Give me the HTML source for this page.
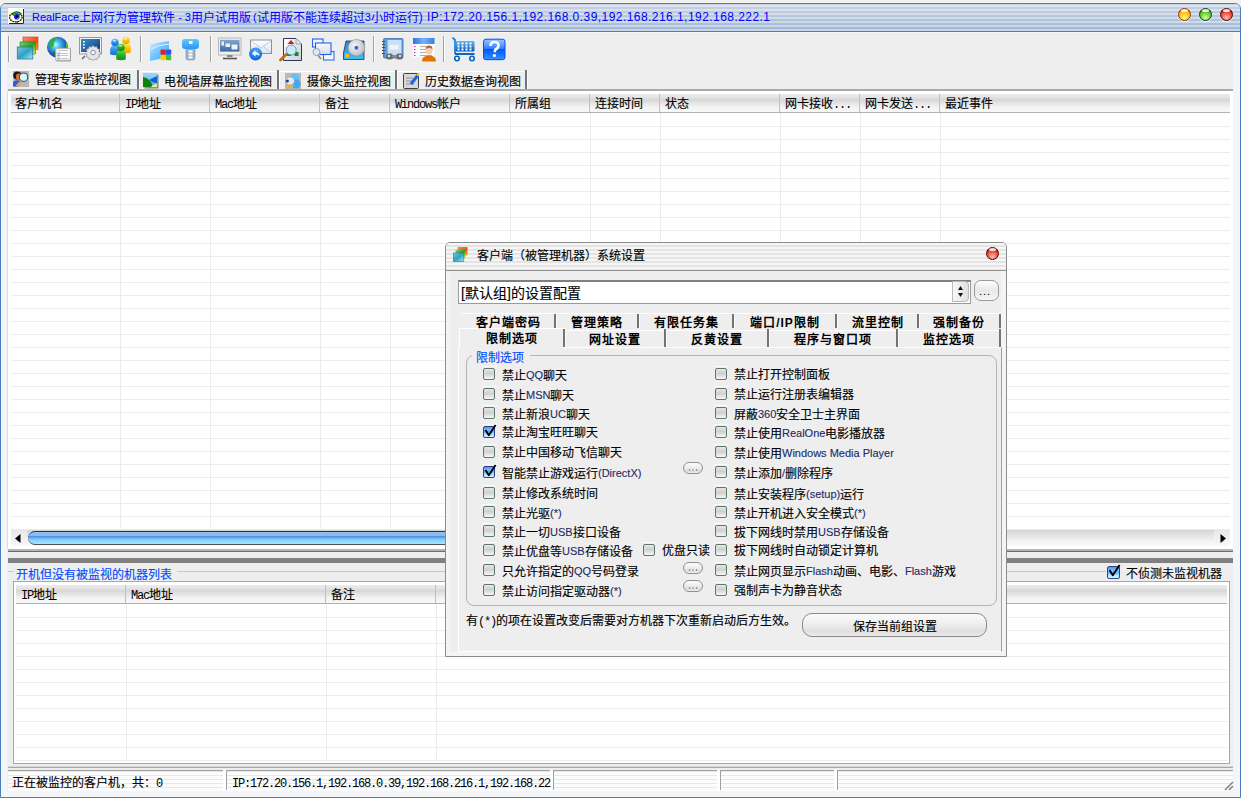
<!DOCTYPE html>
<html lang="zh-CN"><head><meta charset="utf-8">
<style>
*{box-sizing:border-box;margin:0;padding:0}
html,body{width:1241px;height:798px;overflow:hidden;background:#f0f0f0;font-family:"Liberation Sans",sans-serif;font-size:12px;color:#000;line-height:1}
.a{position:absolute}
.tx{white-space:nowrap;line-height:16px;-webkit-text-stroke:0.12px currentColor}
.l{font-size:11px;vertical-align:1px}
.m{font-family:"Liberation Mono",monospace;font-size:12px;letter-spacing:-1.2px;-webkit-text-stroke:0}
.hdr{background:linear-gradient(180deg,#ececec 0,#e4e4e4 18%,#d6d6d6 33%,#e4e4e4 50%,#f4f4f4 75%,#f8f8f8 100%);border-bottom:1px solid #b0b0b0}
.hs{background:#c0c0c0}
.sep{border-left:1px solid #a0a0a0;border-right:1px solid #fff}
.ball{border-radius:50%}
.cb{border:1px solid #5d7a68;border-radius:2px;background:linear-gradient(180deg,#e6e6e6,#d0d0d0 45%,#f6f6f6)}
.cbk{border:1px solid #30408a;border-radius:2px;background:linear-gradient(180deg,#5090f0 0,#80c0ff 30%,#58b0ff 45%,#a8e4ff 75%,#d0faff 100%)}
.stripe{background:repeating-linear-gradient(180deg,#fcfcfc 0 1px,#e8e8e8 1px 2px,#fcfcfc 2px 4px)}
.grp{color:#0048ff}
.nv{color:#1c2c66}
</style></head><body>
<div class="a " style="left:0px;top:3px;width:1241px;height:795px;border:1px solid #4b7cbd;border-radius:6px 6px 0 0;background:#f3f5f9"></div>
<div class="a " style="left:1px;top:4px;width:1239px;height:27px;border-radius:5px 5px 0 0;background:repeating-linear-gradient(180deg,rgba(255,255,255,0) 0 1px,rgba(255,255,255,.4) 1px 3px,rgba(255,255,255,0) 3px 4px),linear-gradient(180deg,#c8d3e2,#9fb8d6)"></div>
<div class="a " style="left:0px;top:31px;width:1241px;height:1px;background:#4b7cbd"></div>
<div class="a " style="left:1px;top:32px;width:1239px;height:1px;background:#faf7f0"></div>
<div class="a " style="left:7px;top:33px;width:1226px;height:758px;background:#eeeeee"></div>
<div class="a tx" style="left:32px;top:9px;color:#0000ff;-webkit-text-stroke:0"><span class="l">RealFace</span>上网行为管理软件<span class="l"> - 3</span>用户试用版<span class="l" style="margin-left:2px">(</span>试用版不能连续超过<span class="l">3</span>小时运行<span class="l" style="font-size:12px;letter-spacing:0.45px">) IP:172.20.156.1,192.168.0.39,192.168.216.1,192.168.222.1</span></div>
<svg class="a" style="left:8px;top:8px" width="16" height="16" viewBox="0 0 16 16"><rect x="0" y="0" width="16" height="16" fill="#fff"/><path d="M15.5 1V15.5H1" stroke="#800000" stroke-width="1" fill="none"/><ellipse cx="7.8" cy="9.3" rx="6.3" ry="4.6" fill="none" stroke="#b8a800" stroke-width="1.2"/><ellipse cx="7.8" cy="9.3" rx="6.3" ry="4.6" fill="none" stroke="#000" stroke-width="1.2" stroke-dasharray="1.2 1.4"/><path d="M4 6 Q8 1.5 13.5 5.5 L12 7 Q8 4.5 5 7.5Z" fill="#10c010" stroke="#000" stroke-width=".5"/><circle cx="8.8" cy="8.8" r="2.8" fill="#1818f0"/><circle cx="9" cy="8.5" r="1.3" fill="#000"/><rect x="8.8" y="9.8" width="2" height="1" fill="#20c0c0"/><circle cx="9.3" cy="14" r="1" fill="#f01010"/></svg>
<div class="a ball" style="left:1178.0px;top:8px;width:13px;height:13px;border:1px solid #903000;background:radial-gradient(circle at 50% 80%,#ffff80 0,#ffb000 65%,#903000 100%);box-shadow:0 1px 1px rgba(255,255,255,.8)"></div>
<div class="a" style="left:1181.0px;top:9px;width:7px;height:3px;border-radius:50%;background:rgba(255,255,255,.85)"></div>
<div class="a ball" style="left:1199.0px;top:8px;width:13px;height:13px;border:1px solid #103810;background:radial-gradient(circle at 50% 80%,#d0ffa0 0,#50c020 65%,#103810 100%);box-shadow:0 1px 1px rgba(255,255,255,.8)"></div>
<div class="a" style="left:1202.0px;top:9px;width:7px;height:3px;border-radius:50%;background:rgba(255,255,255,.85)"></div>
<div class="a ball" style="left:1220.0px;top:8px;width:13px;height:13px;border:1px solid #500000;background:radial-gradient(circle at 50% 80%,#ffc0b0 0,#e83020 65%,#500000 100%);box-shadow:0 1px 1px rgba(255,255,255,.8)"></div>
<div class="a" style="left:1223.0px;top:9px;width:7px;height:3px;border-radius:50%;background:rgba(255,255,255,.85)"></div>
<div class="a sep" style="left:8px;top:36px;width:2px;height:26px;"></div>
<div class="a sep" style="left:140px;top:36px;width:2px;height:26px;"></div>
<div class="a sep" style="left:210px;top:36px;width:2px;height:26px;"></div>
<div class="a sep" style="left:373px;top:36px;width:2px;height:26px;"></div>
<div class="a sep" style="left:443px;top:36px;width:2px;height:26px;"></div>
<svg class="a" style="left:16px;top:36px" width="24" height="24" viewBox="0 0 24 24"><defs><linearGradient id="g1r" x1="0" y1="0" x2="1" y2="1"><stop offset="0" stop-color="#f49080"/><stop offset=".6" stop-color="#ff4810"/><stop offset="1" stop-color="#ffb030"/></linearGradient><linearGradient id="g1g" x1="0" y1="0" x2="1" y2="1"><stop offset="0" stop-color="#80d080"/><stop offset=".5" stop-color="#28a020"/><stop offset="1" stop-color="#d0f850"/></linearGradient><linearGradient id="g1b" x1="0" y1="0" x2="1" y2="1"><stop offset="0" stop-color="#80c8e0"/><stop offset=".5" stop-color="#30a0c0"/><stop offset="1" stop-color="#a0f0fc"/></linearGradient></defs><rect x="7" y="1" width="15" height="12.5" fill="url(#g1r)" stroke="#c04020" stroke-width=".6"/><rect x="4" y="6" width="15.5" height="12" fill="url(#g1g)" stroke="#208020" stroke-width=".6"/><rect x="1.3" y="11" width="15.5" height="12" fill="url(#g1b)" stroke="#307890" stroke-width=".8"/></svg>
<svg class="a" style="left:46px;top:36px" width="26" height="26" viewBox="0 0 26 26"><defs><radialGradient id="g2" cx=".42" cy=".38" r=".65"><stop offset="0" stop-color="#c8fcff"/><stop offset=".3" stop-color="#40c0f0"/><stop offset=".75" stop-color="#2050c0"/><stop offset="1" stop-color="#102890"/></radialGradient></defs><circle cx="11.5" cy="11.2" r="10.5" fill="url(#g2)"/><path d="M3.5 5 Q6 2 10 1.5 Q11 3 9 5 Q7 7 8 9 Q6 11 5 13 Q3 11 2.5 8Z" fill="#30b030" opacity=".9"/><path d="M19.5 5.5 Q21.5 8 22 11 L21 13 Q19.5 11 20 8Z" fill="#50c030"/><path d="M7 16 Q10 15 12 17 L11.5 21 Q9 20.5 7.5 19Z" fill="#108018"/><rect x="9.8" y="12.3" width="14.6" height="12" fill="#fafafa" stroke="#b0b0b0" stroke-width="1"/><path d="M24.5 13 V25 H10.5" stroke="#a0a0a0" stroke-width="1" fill="none"/><path d="M12 14.5h10M14.5 17.5h7.5M14.5 19.5h7.5M14.5 22.5h7.5" stroke="#c4c4d4" stroke-width="1"/><path d="M11.5 17.3l1 .7 1-1.5M11.5 19.5l1 .7 1-1.5M11.5 22.4l1 .7 1-1.5" stroke="#3070c0" stroke-width="1" fill="none"/></svg>
<svg class="a" style="left:78px;top:36px" width="26" height="26" viewBox="0 0 26 26"><defs><linearGradient id="g3" x1="0" y1="0" x2="1" y2="1"><stop offset="0" stop-color="#3a8cc8"/><stop offset=".4" stop-color="#2870b0"/><stop offset="1" stop-color="#0c3070"/></linearGradient></defs><rect x="1.5" y="1.5" width="22" height="16.5" fill="#f4f4f4" stroke="#989898" stroke-width="1"/><rect x="3" y="3" width="19" height="13" fill="url(#g3)"/><rect x="5" y="5" width="1.8" height="1.5" fill="#fff"/><rect x="5" y="8" width="1.8" height="1.5" fill="#fff"/><rect x="5" y="11" width="1.8" height="1.5" fill="#fff"/><path d="M15 9.5l1.6 1.6 2.2-.6.6 2.2 2.2.6-.6 2.2 1.6 1.6-1.6 1.6.6 2.2-2.2.6-.6 2.2-2.2-.6-1.6 1.6-1.6-1.6-2.2.6-.6-2.2-2.2-.6.6-2.2-1.6-1.6 1.6-1.6-.6-2.2 2.2-.6.6-2.2 2.2.6z" fill="#e6e6e6" stroke="#909090" stroke-width=".8"/><circle cx="15" cy="16.5" r="2.3" fill="#fafafa" stroke="#8090a8" stroke-width="1"/><path d="M4 23l3-3" stroke="#606060" stroke-width="1.5"/></svg>
<svg class="a" style="left:109px;top:36px" width="24" height="26" viewBox="0 0 24 26"><defs><linearGradient id="p1" x1="0" y1="0" x2="0" y2="1"><stop offset="0" stop-color="#ffe860"/><stop offset=".5" stop-color="#ffc000"/><stop offset="1" stop-color="#f0a000"/></linearGradient><linearGradient id="p2" x1="0" y1="0" x2="0" y2="1"><stop offset="0" stop-color="#70b8ff"/><stop offset=".5" stop-color="#2a8ce8"/><stop offset="1" stop-color="#1870d0"/></linearGradient><linearGradient id="p3" x1="0" y1="0" x2="0" y2="1"><stop offset="0" stop-color="#60d060"/><stop offset=".5" stop-color="#20b020"/><stop offset="1" stop-color="#109010"/></linearGradient></defs><path d="M12.2 16.5 V11.5 Q12.2 7.5 17 7.5 Q21.8 7.5 21.8 11.5 V16.5 Q17 18.0 12.2 16.5Z" fill="url(#p1)"/><circle cx="17" cy="4.5" r="3.8" fill="url(#p1)"/><ellipse cx="16.4" cy="2.7" rx="1.8" ry="1" fill="#fff" opacity=".6"/><path d="M1.2000000000000002 18.5 V13.5 Q1.2000000000000002 9.5 6 9.5 Q10.8 9.5 10.8 13.5 V18.5 Q6 20.0 1.2000000000000002 18.5Z" fill="url(#p2)"/><circle cx="6" cy="6.5" r="3.8" fill="url(#p2)"/><ellipse cx="5.4" cy="4.7" rx="1.8" ry="1" fill="#fff" opacity=".6"/><path d="M7.2 23.5 V18.5 Q7.2 14.5 12 14.5 Q16.8 14.5 16.8 18.5 V23.5 Q12 25.0 7.2 23.5Z" fill="url(#p3)"/><circle cx="12" cy="11.5" r="3.8" fill="url(#p3)"/><ellipse cx="11.4" cy="9.7" rx="1.8" ry="1" fill="#fff" opacity=".6"/></svg>
<svg class="a" style="left:148px;top:40px" width="26" height="23" viewBox="0 0 26 23"><defs><linearGradient id="g5" x1="0" y1="0" x2="1" y2="1"><stop offset="0" stop-color="#e8f0ff"/><stop offset=".4" stop-color="#80c8ff"/><stop offset="1" stop-color="#20b0ff"/></linearGradient></defs><path d="M2 4 L21 1 L21 17 L2 21Z" fill="url(#g5)"/><path d="M3 9 Q10 5 21 4" stroke="#e0f4ff" stroke-width="1" fill="none"/><rect x="12.5" y="9.5" width="5.3" height="5.3" rx="1" fill="#e82020"/><rect x="18" y="9.5" width="5.3" height="5.3" rx="1" fill="#3050e0"/><rect x="12.5" y="15" width="5.3" height="5.3" rx="1" fill="#f8d000"/><rect x="18" y="15" width="5.3" height="5.3" rx="1" fill="#40c030"/></svg>
<svg class="a" style="left:181px;top:38px" width="20" height="24" viewBox="0 0 20 24"><defs><linearGradient id="g6" x1="0" y1="0" x2="0" y2="1"><stop offset="0" stop-color="#60c8ff"/><stop offset="1" stop-color="#2898f0"/></linearGradient></defs><rect x="5" y="10" width="9" height="12" rx="2" fill="#98b0c8" stroke="#7890a8" stroke-width=".6"/><rect x="7.5" y="12.5" width="4" height="2" fill="#fff"/><rect x="7.5" y="15.5" width="4" height="2" fill="#fff"/><rect x="7.5" y="18.5" width="4" height="2" fill="#fff"/><rect x="1" y="1" width="17" height="10" rx="3" fill="url(#g6)"/><rect x="8" y="3" width="3.5" height="3" fill="#fff"/></svg>
<svg class="a" style="left:217px;top:37px" width="26" height="24" viewBox="0 0 26 24"><defs><linearGradient id="g7" x1="0" y1="0" x2="0" y2="1"><stop offset="0" stop-color="#80a8d0"/><stop offset="1" stop-color="#3a68a8"/></linearGradient></defs><rect x="1.5" y="1" width="22.5" height="17" fill="#f0f0ec" stroke="#b8b8b8" stroke-width="1"/><rect x="3" y="2.8" width="19.5" height="11.8" fill="url(#g7)"/><rect x="4.5" y="4.5" width="2.5" height="4" fill="#f0f0f0"/><rect x="8.5" y="6.5" width="4.5" height="3.5" fill="#f0f0f0"/><rect x="14.5" y="7.5" width="6" height="5" fill="#f0f0f0"/><rect x="10" y="18" width="5.5" height="2" fill="#888"/><path d="M6 21.5h14" stroke="#555" stroke-width="1.6"/></svg>
<svg class="a" style="left:248px;top:38px" width="26" height="26" viewBox="0 0 26 26"><defs><linearGradient id="g8" x1="0" y1="0" x2="0" y2="1"><stop offset="0" stop-color="#ffffff"/><stop offset="1" stop-color="#d8e4f4"/></linearGradient><radialGradient id="g8b" cx=".5" cy=".3" r=".7"><stop offset="0" stop-color="#60b0ff"/><stop offset="1" stop-color="#0060d8"/></radialGradient></defs><rect x="2.5" y="2" width="21" height="13.5" fill="url(#g8)" stroke="#909090" stroke-width="1"/><path d="M3 3 L13 10 L23 3 M3 15 L10 9 M23 15 L16 9" stroke="#a8c0e0" stroke-width=".8" fill="none"/><circle cx="7.6" cy="16" r="6.5" fill="url(#g8b)"/><path d="M4 15.5 L7.5 12.5 L7.5 14.3 Q11 14 11.5 18 Q10 16 7.5 16.5 L7.5 18.5Z" fill="#fff"/></svg>
<svg class="a" style="left:279px;top:37px" width="25" height="26" viewBox="0 0 25 26"><defs><linearGradient id="g9" x1="0" y1="0" x2="1" y2="1"><stop offset="0" stop-color="#ffffff"/><stop offset="1" stop-color="#c8d0dc"/></linearGradient></defs><path d="M4.5 1.5 H17 L22.5 7 V23.5 H4.5Z" fill="url(#g9)" stroke="#283858" stroke-width="1"/><path d="M17 1.5 V7 H22.5" fill="#e0e8f0" stroke="#8898b0" stroke-width=".8"/><path d="M12 3 L15.5 7 H8.5Z" fill="#e01818"/><rect x="8" y="15" width="4" height="4" fill="#109010"/><rect x="15.5" y="15" width="4" height="4" fill="#109010"/><circle cx="12.2" cy="13" r="5" fill="#c8ecff" stroke="#8090b0" stroke-width="1"/><path d="M1.5 23 L7 17.5" stroke="#c86818" stroke-width="2.8" stroke-linecap="round"/></svg>
<svg class="a" style="left:311px;top:37px" width="25" height="25" viewBox="0 0 25 25"><defs><linearGradient id="g10" x1="0" y1="0" x2="0" y2="1"><stop offset="0" stop-color="#fafafa"/><stop offset="1" stop-color="#d8dce4"/></linearGradient></defs><rect x="1.5" y="2" width="10.5" height="8" fill="#f0f4fa" stroke="#2860e8" stroke-width="1.1"/><rect x="12.5" y="14.5" width="10.5" height="8.5" fill="#f4f8fc" stroke="#2870f0" stroke-width="1.1"/><rect x="4.5" y="6" width="15.5" height="11.5" fill="url(#g10)" stroke="#2060f0" stroke-width="1.1"/><path d="M5 16 L10 22" stroke="#a08860" stroke-width="1.6"/><circle cx="5.5" cy="15" r="3.5" fill="#d8ecf8" stroke="#8098b8" stroke-width=".9"/></svg>
<svg class="a" style="left:342px;top:38px" width="25" height="24" viewBox="0 0 25 24"><defs><linearGradient id="g11" x1="0" y1="0" x2="0" y2="1"><stop offset="0" stop-color="#3080e0"/><stop offset="1" stop-color="#40c0f8"/></linearGradient><radialGradient id="g11c" cx=".4" cy=".4" r=".7"><stop offset="0" stop-color="#f8f8f8"/><stop offset="1" stop-color="#b8b8b8"/></radialGradient></defs><path d="M4 3 H22 V21.5 H1.5 V15Z" fill="url(#g11)" stroke="#203040" stroke-width=".8"/><circle cx="14.4" cy="9.7" r="8.3" fill="url(#g11c)" stroke="#909090" stroke-width=".6"/><circle cx="14.4" cy="9.7" r="2" fill="#2070e0"/><circle cx="5.2" cy="17.5" r="2" fill="#f8c000"/></svg>
<svg class="a" style="left:381px;top:37px" width="25" height="25" viewBox="0 0 25 25"><defs></defs><rect x="2.5" y="1.5" width="19.5" height="19.5" rx="1" fill="#5c9ce0" stroke="#4070b0" stroke-width=".8"/><rect x="6.5" y="3" width="14" height="15" fill="#c8e0f8"/><rect x="8.5" y="8" width="9" height="4.5" fill="#f4f4f4"/><path d="M1 4.5h3M1 7.5h3M1 10.5h3M1 13.5h3M1 16.5h3" stroke="#505050" stroke-width="1"/><rect x="5" y="16.5" width="7" height="6" rx="2.5" fill="#707070"/><rect x="15" y="16.5" width="7" height="6" rx="2.5" fill="#707070"/><rect x="11" y="18" width="5" height="2" fill="#888"/><rect x="7" y="18" width="2" height="2" fill="#c0f0ff"/><rect x="18" y="18" width="2" height="2" fill="#c0f0ff"/></svg>
<svg class="a" style="left:412px;top:37px" width="26" height="26" viewBox="0 0 26 26"><defs><linearGradient id="g13" x1="0" y1="0" x2="1" y2="0"><stop offset="0" stop-color="#2878d8"/><stop offset=".5" stop-color="#78b0f8"/><stop offset="1" stop-color="#3080e0"/></linearGradient></defs><rect x="1" y="1" width="21.5" height="19.5" fill="#fafafa"/><rect x="1" y="1" width="21.5" height="6" fill="url(#g13)"/><path d="M8 9.5h12M8 12.5h12M8 15.5h12M8 18.5h12" stroke="#b0b0b0" stroke-width="1"/><path d="M2 9.5h1.5M2 12.5h1.5M2 15.5h1.5M2 18.5h1.5" stroke="#e020d0" stroke-width="1.2"/><path d="M10 24.5 Q10 18.5 17 18.5 Q24 18.5 24 24.5Z" fill="#e87000"/><ellipse cx="17" cy="13.2" rx="3.5" ry="4.2" fill="#f4d0b0"/><path d="M13.5 12 Q13.5 8.5 17 8.5 Q20.5 8.5 20.5 12 Q17 10 13.5 12Z" fill="#a87040"/></svg>
<svg class="a" style="left:451px;top:36px" width="26" height="26" viewBox="0 0 26 26"><defs><linearGradient id="g14" x1="0" y1="0" x2="0" y2="1"><stop offset="0" stop-color="#60b8f8"/><stop offset="1" stop-color="#0858b8"/></linearGradient></defs><path d="M1.5 1.5 L4 4 V18" stroke="#2890e0" stroke-width="2" fill="none"/><rect x="4.5" y="5" width="19" height="10.5" rx="1" fill="url(#g14)"/><g fill="#fff"><rect x="6.5" y="6.5" width="2" height="2"/><rect x="10.5" y="6.5" width="2" height="2"/><rect x="14.5" y="6.5" width="2" height="2"/><rect x="18.5" y="6.5" width="2" height="2"/><rect x="6.5" y="9.5" width="2" height="2"/><rect x="10.5" y="9.5" width="2" height="2"/><rect x="14.5" y="9.5" width="2" height="2"/><rect x="18.5" y="9.5" width="2" height="2"/><rect x="6.5" y="12.5" width="2" height="2"/><rect x="10.5" y="12.5" width="2" height="2"/><rect x="14.5" y="12.5" width="2" height="2"/><rect x="18.5" y="12.5" width="2" height="2"/></g><rect x="4" y="17" width="19.5" height="2" fill="#0a68c8"/><circle cx="6" cy="22.5" r="2.2" fill="#fff" stroke="#0860c0" stroke-width="1.6"/><circle cx="21" cy="22.5" r="2.2" fill="#fff" stroke="#0860c0" stroke-width="1.6"/></svg>
<svg class="a" style="left:482px;top:38px" width="25" height="23" viewBox="0 0 25 23"><defs><linearGradient id="g15" x1="0" y1="0" x2="0" y2="1"><stop offset="0" stop-color="#98c8ff"/><stop offset=".45" stop-color="#3880ff"/><stop offset=".5" stop-color="#0058ff"/><stop offset="1" stop-color="#3890ff"/></linearGradient></defs><rect x="1.5" y="1.2" width="21.5" height="20.5" rx="2.5" fill="url(#g15)" stroke="#0050e8" stroke-width="1"/><path d="M8.5 8 Q8.5 4 12.5 4 Q16.5 4 16.5 7.5 Q16.5 10 13.5 11.5 L12.5 14" stroke="#fff" stroke-width="2.6" fill="none"/><circle cx="12.4" cy="17.5" r="1.6" fill="#fff"/></svg>
<svg class="a" style="left:13px;top:71px" width="16" height="16" viewBox="0 0 16 16"><defs></defs><rect x="0" y="0" width="16" height="16" fill="#b8b8b8"/><circle cx="4.3" cy="4.6" r="4.1" fill="#181818"/><ellipse cx="5.6" cy="5.8" rx="2.6" ry="3.4" fill="#e07020"/><path d="M0 15.5 V11 Q1.5 8.8 5 9.2 L8.5 10.5 L4.5 15.5Z" fill="#3058e8"/><path d="M3.5 15 L9.5 9" stroke="#f0a030" stroke-width="2.2"/><circle cx="10.6" cy="6.2" r="4.2" fill="#d4f6ff" stroke="#484e60" stroke-width="1.1"/></svg>
<svg class="a" style="left:143px;top:73px" width="16" height="16" viewBox="0 0 16 16"><defs><linearGradient id="gt2" x1="0" y1="0" x2="0" y2="1"><stop offset="0" stop-color="#a0d8ff"/><stop offset="1" stop-color="#40b0f0"/></linearGradient></defs><rect x="1.5" y="1.5" width="14" height="14" fill="#808080"/><rect x="0" y="0" width="14" height="14" fill="url(#gt2)" stroke="#c0b0b0" stroke-width=".5"/><path d="M0 4 Q5 5 8 9 Q10 12 9 14 H0Z" fill="#108010"/><path d="M6 7 Q10 5 14 3 V10 Q10 10 8 8Z" fill="#1060d0"/><path d="M8 14 Q10 11 14 11 V14Z" fill="#e8f090"/></svg>
<svg class="a" style="left:285px;top:73px" width="16" height="16" viewBox="0 0 16 16"><defs></defs><rect x="0" y="0" width="16" height="16" fill="#b8b8b8"/><circle cx="10" cy="5" r="4.2" fill="#60c0f8"/><circle cx="11" cy="11" r="4.5" fill="#40a8f0"/><path d="M1 12 Q5 15 9 12" stroke="#f0b020" stroke-width="2" fill="none"/><ellipse cx="5" cy="8" rx="4.5" ry="4" fill="#e8e8f0" stroke="#909090" stroke-width=".5"/><circle cx="2.3" cy="8" r="1.6" fill="#1040a0"/></svg>
<svg class="a" style="left:403px;top:73px" width="16" height="16" viewBox="0 0 16 16"><defs></defs><rect x="0.5" y="0.5" width="15" height="15" rx="1" fill="#d8d8d8" stroke="#404040" stroke-width="1"/><path d="M3 5h7M3 8h8M3 11h8" stroke="#909090" stroke-width="1"/><path d="M8 11 L15 2" stroke="#2060e0" stroke-width="3"/><path d="M14 2.5 L15.5 1" stroke="#f0c000" stroke-width="2.5"/></svg>
<div class="a " style="left:8px;top:69px;width:130px;height:1px;background:#fff"></div>
<div class="a " style="left:139px;top:71px;width:388px;height:1px;background:#fff"></div>
<div class="a " style="left:137px;top:70px;width:3px;height:19px;border-left:2px solid #747474;border-right:1px solid #fafafa"></div>
<div class="a " style="left:277px;top:70px;width:3px;height:19px;border-left:2px solid #747474;border-right:1px solid #fafafa"></div>
<div class="a " style="left:395px;top:70px;width:3px;height:19px;border-left:2px solid #747474;border-right:1px solid #fafafa"></div>
<div class="a " style="left:525px;top:70px;width:3px;height:19px;border-left:2px solid #747474;border-right:1px solid #fafafa"></div>
<div class="a " style="left:8px;top:89px;width:1225px;height:2px;background:#aaaaaa"></div>
<div class="a tx " style="left:35px;top:72px;">管理专家监控视图</div>
<div class="a tx " style="left:164px;top:74px;">电视墙屏幕监控视图</div>
<div class="a tx " style="left:307px;top:74px;">摄像头监控视图</div>
<div class="a tx " style="left:425px;top:74px;">历史数据查询视图</div>
<div class="a " style="left:7px;top:91px;width:1226px;height:458px;background:#fff;border-left:1px solid #dcdcdc"></div>
<div class="a " style="left:11px;top:114px;width:1219px;height:416px;background:repeating-linear-gradient(180deg,transparent 0 12px,#ececec 12px 13px) 0 0/100% 13px repeat-y"></div>
<div class="a " style="left:120px;top:113px;width:1px;height:417px;background:#ececec"></div>
<div class="a " style="left:210px;top:113px;width:1px;height:417px;background:#ececec"></div>
<div class="a " style="left:320px;top:113px;width:1px;height:417px;background:#ececec"></div>
<div class="a " style="left:390px;top:113px;width:1px;height:417px;background:#ececec"></div>
<div class="a " style="left:510px;top:113px;width:1px;height:417px;background:#ececec"></div>
<div class="a " style="left:590px;top:113px;width:1px;height:417px;background:#ececec"></div>
<div class="a " style="left:660px;top:113px;width:1px;height:417px;background:#ececec"></div>
<div class="a " style="left:780px;top:113px;width:1px;height:417px;background:#ececec"></div>
<div class="a " style="left:860px;top:113px;width:1px;height:417px;background:#ececec"></div>
<div class="a " style="left:940px;top:113px;width:1px;height:417px;background:#ececec"></div>
<div class="a hdr" style="left:11px;top:94px;width:1219px;height:19px;"></div>
<div class="a hs" style="left:119px;top:94px;width:1px;height:18px;"></div>
<div class="a hs" style="left:209px;top:94px;width:1px;height:18px;"></div>
<div class="a hs" style="left:319px;top:94px;width:1px;height:18px;"></div>
<div class="a hs" style="left:389px;top:94px;width:1px;height:18px;"></div>
<div class="a hs" style="left:509px;top:94px;width:1px;height:18px;"></div>
<div class="a hs" style="left:589px;top:94px;width:1px;height:18px;"></div>
<div class="a hs" style="left:659px;top:94px;width:1px;height:18px;"></div>
<div class="a hs" style="left:779px;top:94px;width:1px;height:18px;"></div>
<div class="a hs" style="left:859px;top:94px;width:1px;height:18px;"></div>
<div class="a hs" style="left:939px;top:94px;width:1px;height:18px;"></div>
<div class="a tx " style="left:15px;top:96px;">客户机名</div>
<div class="a tx " style="left:125px;top:96px;"><span class="m">IP</span>地址</div>
<div class="a tx " style="left:215px;top:96px;"><span class="m">Mac</span>地址</div>
<div class="a tx " style="left:325px;top:96px;">备注</div>
<div class="a tx " style="left:395px;top:96px;"><span class="m">Windows</span>帐户</div>
<div class="a tx " style="left:515px;top:96px;">所属组</div>
<div class="a tx " style="left:595px;top:96px;">连接时间</div>
<div class="a tx " style="left:665px;top:96px;">状态</div>
<div class="a tx " style="left:785px;top:96px;">网卡接收<span class="m">...</span></div>
<div class="a tx " style="left:865px;top:96px;">网卡发送<span class="m">...</span></div>
<div class="a tx " style="left:945px;top:96px;">最近事件</div>
<div class="a " style="left:11px;top:530px;width:1219px;height:16px;background:linear-gradient(180deg,#d4d4d4,#f4f4f4 70%,#fafafa)"></div>
<div class="a " style="left:11px;top:530px;width:16px;height:16px;background:linear-gradient(180deg,#e8e8e8,#f8f8f8)"></div>
<div class="a " style="left:1214px;top:530px;width:16px;height:16px;background:linear-gradient(180deg,#e8e8e8,#f8f8f8)"></div>
<svg class="a" style="left:15px;top:534px" width="6" height="9"><path d="M5.5 0V9L0 4.5Z" fill="#000"/></svg>
<svg class="a" style="left:1220px;top:534px" width="6" height="9"><path d="M0.5 0V9L6 4.5Z" fill="#000"/></svg>
<div class="a " style="left:28px;top:531px;width:600px;height:14px;border-radius:7px 0 0 7px;border-top:1px solid #0030c0;border-bottom:1px solid #505050;background:linear-gradient(180deg,#98bee8 0,#90b8e6 30%,#4a92e4 38%,#6cb0f8 50%,#88d0fc 65%,#a0e8ff 100%)"></div>
<div class="a " style="left:8px;top:549px;width:1225px;height:2px;background:#b4b4b4"></div>
<div class="a " style="left:8px;top:551px;width:1225px;height:1px;background:#6c6c6c"></div>
<div class="a " style="left:8px;top:558px;width:1225px;height:5px;background:#808080"></div>
<div class="a " style="left:8px;top:571px;width:6px;height:1px;background:#c8c8c8"></div>
<div class="a " style="left:177px;top:571px;width:929px;height:1px;background:#c8c8c8"></div>
<div class="a tx grp" style="left:16px;top:567px;">开机但没有被监视的机器列表</div>
<div class="a cbk" style="left:1107px;top:566px;width:13px;height:13px;"></div>
<svg class="a" style="left:1108px;top:563px" width="14" height="15"><path d="M1.5 7 L4.8 12.3 L11.6 2" stroke="#000" stroke-width="1.9" fill="none" stroke-linejoin="round"/></svg>
<div class="a tx " style="left:1126px;top:566px;">不侦测未监视机器</div>
<div class="a " style="left:13px;top:581px;width:1217px;height:183px;background:#fff;border:1px solid #a8a8a8"></div>
<div class="a " style="left:16px;top:605px;width:1211px;height:156px;background:repeating-linear-gradient(180deg,transparent 0 12px,#ececec 12px 13px) 0 0/100% 13px repeat-y"></div>
<div class="a " style="left:126px;top:603px;width:1px;height:158px;background:#ececec"></div>
<div class="a " style="left:326px;top:603px;width:1px;height:158px;background:#ececec"></div>
<div class="a " style="left:436px;top:603px;width:1px;height:158px;background:#ececec"></div>
<div class="a hdr" style="left:16px;top:585px;width:1211px;height:19px;"></div>
<div class="a hs" style="left:125px;top:585px;width:1px;height:18px;"></div>
<div class="a hs" style="left:325px;top:585px;width:1px;height:18px;"></div>
<div class="a hs" style="left:435px;top:585px;width:1px;height:18px;"></div>
<div class="a tx " style="left:21px;top:587px;"><span class="m">IP</span>地址</div>
<div class="a tx " style="left:131px;top:587px;"><span class="m">Mac</span>地址</div>
<div class="a tx " style="left:331px;top:587px;">备注</div>
<div class="a " style="left:8px;top:766px;width:1225px;height:1px;background:#d8d8d8"></div>
<div class="a " style="left:8px;top:767px;width:1225px;height:1px;background:#a8a8a8"></div>
<div class="a " style="left:445px;top:242px;width:562px;height:415px;border:1px solid #8c8c8c;border-radius:5px 5px 0 0;background:#f4f4f4"></div>
<div class="a " style="left:446px;top:243px;width:560px;height:27px;border-radius:4px 4px 0 0;background:repeating-linear-gradient(180deg,#f6f6f6 0 2px,#e4e4e4 2px 4px)"></div>
<div class="a " style="left:446px;top:270px;width:560px;height:1px;background:#929292"></div>
<div class="a " style="left:450px;top:271px;width:551px;height:381px;background:#eeeeee"></div>
<svg class="a" style="left:452px;top:246px" width="17" height="17" viewBox="0 0 17 17"><defs><linearGradient id="d1r" x1="0" y1="0" x2="1" y2="1"><stop offset="0" stop-color="#f49080"/><stop offset=".6" stop-color="#ff4810"/><stop offset="1" stop-color="#ffb030"/></linearGradient><linearGradient id="d1g" x1="0" y1="0" x2="1" y2="1"><stop offset="0" stop-color="#80d080"/><stop offset=".5" stop-color="#28a020"/><stop offset="1" stop-color="#d0f850"/></linearGradient><linearGradient id="d1b" x1="0" y1="0" x2="1" y2="1"><stop offset="0" stop-color="#80c8e0"/><stop offset=".5" stop-color="#30a0c0"/><stop offset="1" stop-color="#a0f0fc"/></linearGradient></defs><rect x="5.5" y="1" width="10" height="8.5" fill="url(#d1r)"/><rect x="3.5" y="4" width="10" height="8.5" fill="url(#d1g)"/><rect x="1.3" y="7" width="10.5" height="8.5" fill="url(#d1b)" stroke="#307890" stroke-width=".6"/></svg>
<div class="a tx " style="left:477px;top:248px;">客户端（被管理机器）系统设置</div>
<div class="a ball" style="left:986px;top:247px;width:13px;height:13px;border:1px solid #500000;background:radial-gradient(circle at 50% 80%,#ffc0b0 0,#e83020 65%,#500000 100%)"></div>
<div class="a" style="left:989px;top:248px;width:7px;height:3px;border-radius:50%;background:rgba(255,255,255,.85)"></div>
<div class="a " style="left:458px;top:280px;width:513px;height:24px;background:#fff;border:1px solid #9a9a9a;border-top:2px solid #808080"></div>
<div class="a " style="left:952px;top:281px;width:17px;height:21px;border-radius:0 4px 4px 0;border:1px solid #b8b8b8;background:linear-gradient(90deg,#f8f8f8,#e0e0e0)"></div>
<svg class="a" style="left:957px;top:285px" width="8" height="13"><path d="M3.5 1L6 5H1Z M1 8H6L3.5 12Z" fill="#111"/></svg>
<div class="a tx" style="left:461px;top:285px;font-size:14px;line-height:16px">[默认组]的设置配置</div>
<div class="a " style="left:974px;top:280px;width:25px;height:21px;border:1px solid #9a9a9a;border-radius:7px;background:linear-gradient(180deg,#fdfdfd,#e8e8e8 50%,#f6f6f6)"></div>
<div class="a tx " style="left:979px;top:283px;"><span style="color:#000;font-size:11px;letter-spacing:1px">...</span></div>
<div class="a " style="left:461px;top:313px;width:539px;height:1px;background:#fff"></div>
<div class="a " style="left:554px;top:314px;width:3px;height:14px;border-left:2px solid #747474;border-right:1px solid #fafafa"></div>
<div class="a " style="left:637px;top:314px;width:3px;height:14px;border-left:2px solid #747474;border-right:1px solid #fafafa"></div>
<div class="a " style="left:732px;top:314px;width:3px;height:14px;border-left:2px solid #747474;border-right:1px solid #fafafa"></div>
<div class="a " style="left:835px;top:314px;width:3px;height:14px;border-left:2px solid #747474;border-right:1px solid #fafafa"></div>
<div class="a " style="left:917px;top:314px;width:3px;height:14px;border-left:2px solid #747474;border-right:1px solid #fafafa"></div>
<div class="a " style="left:999px;top:314px;width:3px;height:14px;border-left:2px solid #747474;border-right:1px solid #fafafa"></div>
<div class="a " style="left:459px;top:328px;width:106px;height:1px;background:#fff"></div>
<div class="a " style="left:565px;top:330px;width:436px;height:1px;background:#fff"></div>
<div class="a " style="left:563px;top:329px;width:3px;height:18px;border-left:2px solid #747474;border-right:1px solid #fafafa"></div>
<div class="a " style="left:664px;top:329px;width:3px;height:18px;border-left:2px solid #747474;border-right:1px solid #fafafa"></div>
<div class="a " style="left:767px;top:329px;width:3px;height:18px;border-left:2px solid #747474;border-right:1px solid #fafafa"></div>
<div class="a " style="left:896px;top:329px;width:3px;height:18px;border-left:2px solid #747474;border-right:1px solid #fafafa"></div>
<div class="a " style="left:999px;top:329px;width:3px;height:18px;border-left:2px solid #747474;border-right:1px solid #fafafa"></div>
<div class="a " style="left:458px;top:347px;width:544px;height:305px;border-left:1px solid #fff;border-top:1px solid #fff;border-right:1px solid #a0a0a0;border-bottom:1px solid #fff"></div>
<div class="a " style="left:459px;top:329px;width:104px;height:19px;background:#eeeeee;border-left:1px solid #fff"></div>
<div class="a tx" style="left:461px;top:315px;width:94px;text-align:center;font-weight:bold;font-size:12px;letter-spacing:1px;text-indent:1px;-webkit-text-stroke:0">客户端密码</div>
<div class="a tx" style="left:555px;top:315px;width:83px;text-align:center;font-weight:bold;font-size:12px;letter-spacing:1px;text-indent:1px;-webkit-text-stroke:0">管理策略</div>
<div class="a tx" style="left:638px;top:315px;width:95px;text-align:center;font-weight:bold;font-size:12px;letter-spacing:1px;text-indent:1px;-webkit-text-stroke:0">有限任务集</div>
<div class="a tx" style="left:733px;top:315px;width:103px;text-align:center;font-weight:bold;font-size:12px;letter-spacing:1px;text-indent:1px;-webkit-text-stroke:0">端口/IP限制</div>
<div class="a tx" style="left:836px;top:315px;width:82px;text-align:center;font-weight:bold;font-size:12px;letter-spacing:1px;text-indent:1px;-webkit-text-stroke:0">流里控制</div>
<div class="a tx" style="left:918px;top:315px;width:81px;text-align:center;font-weight:bold;font-size:12px;letter-spacing:1px;text-indent:1px;-webkit-text-stroke:0">强制备份</div>
<div class="a tx" style="left:459px;top:331px;width:105px;text-align:center;font-weight:bold;font-size:12px;letter-spacing:1px;text-indent:1px;-webkit-text-stroke:0">限制选项</div>
<div class="a tx" style="left:564px;top:332px;width:101px;text-align:center;font-weight:bold;font-size:12px;letter-spacing:1px;text-indent:1px;-webkit-text-stroke:0">网址设置</div>
<div class="a tx" style="left:665px;top:332px;width:103px;text-align:center;font-weight:bold;font-size:12px;letter-spacing:1px;text-indent:1px;-webkit-text-stroke:0">反黄设置</div>
<div class="a tx" style="left:768px;top:332px;width:129px;text-align:center;font-weight:bold;font-size:12px;letter-spacing:1px;text-indent:1px;-webkit-text-stroke:0">程序与窗口项</div>
<div class="a tx" style="left:897px;top:332px;width:103px;text-align:center;font-weight:bold;font-size:12px;letter-spacing:1px;text-indent:1px;-webkit-text-stroke:0">监控选项</div>
<div class="a " style="left:466px;top:355px;width:531px;height:251px;border:1px solid #b4b4b4;border-radius:8px"></div>
<div class="a " style="left:472px;top:349px;width:58px;height:12px;background:#eeeeee"></div>
<div class="a tx grp" style="left:476px;top:350px;">限制选项</div>
<div class="a " style="left:482px;top:366px;width:15px;height:1px;background:#fbfbfb"></div>
<div class="a cb" style="left:483px;top:368px;width:12px;height:12px;"></div>
<div class="a tx " style="left:502px;top:367px;">禁止<span class="l nv">QQ</span>聊天</div>
<div class="a " style="left:714px;top:366px;width:15px;height:1px;background:#fbfbfb"></div>
<div class="a cb" style="left:715px;top:368px;width:12px;height:12px;"></div>
<div class="a tx " style="left:734px;top:367px;">禁止打开控制面板</div>
<div class="a " style="left:482px;top:386px;width:15px;height:1px;background:#fbfbfb"></div>
<div class="a cb" style="left:483px;top:388px;width:12px;height:12px;"></div>
<div class="a tx " style="left:502px;top:387px;">禁止<span class="l nv">MSN</span>聊天</div>
<div class="a " style="left:714px;top:386px;width:15px;height:1px;background:#fbfbfb"></div>
<div class="a cb" style="left:715px;top:388px;width:12px;height:12px;"></div>
<div class="a tx " style="left:734px;top:387px;">禁止运行注册表编辑器</div>
<div class="a " style="left:482px;top:405px;width:15px;height:1px;background:#fbfbfb"></div>
<div class="a cb" style="left:483px;top:407px;width:12px;height:12px;"></div>
<div class="a tx " style="left:502px;top:406px;">禁止新浪<span class="l nv">UC</span>聊天</div>
<div class="a " style="left:714px;top:405px;width:15px;height:1px;background:#fbfbfb"></div>
<div class="a cb" style="left:715px;top:407px;width:12px;height:12px;"></div>
<div class="a tx " style="left:734px;top:406px;">屏蔽<span class="l nv">360</span>安全卫士主界面</div>
<div class="a " style="left:482px;top:424px;width:15px;height:1px;background:#fbfbfb"></div>
<div class="a cbk" style="left:483px;top:426px;width:12px;height:12px;"></div>
<svg class="a" style="left:484px;top:423px" width="14" height="15"><path d="M1.5 7 L4.8 12.3 L11.6 2" stroke="#000" stroke-width="1.9" fill="none" stroke-linejoin="round"/></svg>
<div class="a tx " style="left:502px;top:425px;">禁止淘宝旺旺聊天</div>
<div class="a " style="left:714px;top:424px;width:15px;height:1px;background:#fbfbfb"></div>
<div class="a cb" style="left:715px;top:426px;width:12px;height:12px;"></div>
<div class="a tx " style="left:734px;top:425px;">禁止使用<span class="l nv">RealOne</span>电影播放器</div>
<div class="a " style="left:482px;top:444px;width:15px;height:1px;background:#fbfbfb"></div>
<div class="a cb" style="left:483px;top:446px;width:12px;height:12px;"></div>
<div class="a tx " style="left:502px;top:445px;">禁止中国移动飞信聊天</div>
<div class="a " style="left:714px;top:444px;width:15px;height:1px;background:#fbfbfb"></div>
<div class="a cb" style="left:715px;top:446px;width:12px;height:12px;"></div>
<div class="a tx " style="left:734px;top:445px;">禁止使用<span class="l nv">Windows Media Player</span></div>
<div class="a " style="left:482px;top:464px;width:15px;height:1px;background:#fbfbfb"></div>
<div class="a cbk" style="left:483px;top:466px;width:12px;height:12px;"></div>
<svg class="a" style="left:484px;top:463px" width="14" height="15"><path d="M1.5 7 L4.8 12.3 L11.6 2" stroke="#000" stroke-width="1.9" fill="none" stroke-linejoin="round"/></svg>
<div class="a tx " style="left:502px;top:465px;">智能禁止游戏运行<span class="l nv">(DirectX)</span></div>
<div class="a " style="left:714px;top:464px;width:15px;height:1px;background:#fbfbfb"></div>
<div class="a cb" style="left:715px;top:466px;width:12px;height:12px;"></div>
<div class="a tx " style="left:734px;top:465px;">禁止添加<span class="l nv">/</span>删除程序</div>
<div class="a " style="left:482px;top:485px;width:15px;height:1px;background:#fbfbfb"></div>
<div class="a cb" style="left:483px;top:487px;width:12px;height:12px;"></div>
<div class="a tx " style="left:502px;top:486px;">禁止修改系统时间</div>
<div class="a " style="left:714px;top:485px;width:15px;height:1px;background:#fbfbfb"></div>
<div class="a cb" style="left:715px;top:487px;width:12px;height:12px;"></div>
<div class="a tx " style="left:734px;top:486px;">禁止安装程序<span class="l nv">(setup)</span>运行</div>
<div class="a " style="left:482px;top:504px;width:15px;height:1px;background:#fbfbfb"></div>
<div class="a cb" style="left:483px;top:506px;width:12px;height:12px;"></div>
<div class="a tx " style="left:502px;top:505px;">禁止光驱<span class="l nv">(*)</span></div>
<div class="a " style="left:714px;top:504px;width:15px;height:1px;background:#fbfbfb"></div>
<div class="a cb" style="left:715px;top:506px;width:12px;height:12px;"></div>
<div class="a tx " style="left:734px;top:505px;">禁止开机进入安全模式<span class="l nv">(*)</span></div>
<div class="a " style="left:482px;top:523px;width:15px;height:1px;background:#fbfbfb"></div>
<div class="a cb" style="left:483px;top:525px;width:12px;height:12px;"></div>
<div class="a tx " style="left:502px;top:524px;">禁止一切<span class="l nv">USB</span>接口设备</div>
<div class="a " style="left:714px;top:523px;width:15px;height:1px;background:#fbfbfb"></div>
<div class="a cb" style="left:715px;top:525px;width:12px;height:12px;"></div>
<div class="a tx " style="left:734px;top:524px;">拔下网线时禁用<span class="l nv">USB</span>存储设备</div>
<div class="a " style="left:482px;top:542px;width:15px;height:1px;background:#fbfbfb"></div>
<div class="a cb" style="left:483px;top:544px;width:12px;height:12px;"></div>
<div class="a tx " style="left:502px;top:543px;">禁止优盘等<span class="l nv">USB</span>存储设备</div>
<div class="a " style="left:714px;top:542px;width:15px;height:1px;background:#fbfbfb"></div>
<div class="a cb" style="left:715px;top:544px;width:12px;height:12px;"></div>
<div class="a tx " style="left:734px;top:543px;">拔下网线时自动锁定计算机</div>
<div class="a " style="left:482px;top:562px;width:15px;height:1px;background:#fbfbfb"></div>
<div class="a cb" style="left:483px;top:564px;width:12px;height:12px;"></div>
<div class="a tx " style="left:502px;top:563px;">只允许指定的<span class="l nv">QQ</span>号码登录</div>
<div class="a " style="left:714px;top:562px;width:15px;height:1px;background:#fbfbfb"></div>
<div class="a cb" style="left:715px;top:564px;width:12px;height:12px;"></div>
<div class="a tx " style="left:734px;top:563px;">禁止网页显示<span class="l nv">Flash</span>动画、电影、<span class="l nv">Flash</span>游戏</div>
<div class="a " style="left:482px;top:582px;width:15px;height:1px;background:#fbfbfb"></div>
<div class="a cb" style="left:483px;top:584px;width:12px;height:12px;"></div>
<div class="a tx " style="left:502px;top:583px;">禁止访问指定驱动器<span class="l nv">(*)</span></div>
<div class="a " style="left:714px;top:582px;width:15px;height:1px;background:#fbfbfb"></div>
<div class="a cb" style="left:715px;top:584px;width:12px;height:12px;"></div>
<div class="a tx " style="left:734px;top:583px;">强制声卡为静音状态</div>
<div class="a " style="left:642px;top:542px;width:15px;height:1px;background:#fbfbfb"></div>
<div class="a cb" style="left:643px;top:544px;width:12px;height:12px;"></div>
<div class="a tx " style="left:662px;top:543px;">优盘只读</div>
<div class="a " style="left:683px;top:462px;width:20px;height:12px;border:1px solid #909090;border-radius:6px/6px;background:linear-gradient(180deg,#fcfcfc,#f0f0f0 40%,#dcdcdc 80%,#f0f0f0)"></div>
<svg class="a" style="left:688px;top:469px" width="10" height="2"><path d="M1 1h1M4.5 1h1M8 1h1" stroke="#303080" stroke-width="1"/></svg>
<div class="a " style="left:683px;top:562px;width:20px;height:12px;border:1px solid #909090;border-radius:6px/6px;background:linear-gradient(180deg,#fcfcfc,#f0f0f0 40%,#dcdcdc 80%,#f0f0f0)"></div>
<svg class="a" style="left:688px;top:569px" width="10" height="2"><path d="M1 1h1M4.5 1h1M8 1h1" stroke="#303080" stroke-width="1"/></svg>
<div class="a " style="left:683px;top:580px;width:20px;height:12px;border:1px solid #909090;border-radius:6px/6px;background:linear-gradient(180deg,#fcfcfc,#f0f0f0 40%,#dcdcdc 80%,#f0f0f0)"></div>
<svg class="a" style="left:688px;top:587px" width="10" height="2"><path d="M1 1h1M4.5 1h1M8 1h1" stroke="#303080" stroke-width="1"/></svg>
<div class="a tx " style="left:466px;top:613px;">有<span class="m">(*)</span>的项在设置改变后需要对方机器下次重新启动后方生效。</div>
<div class="a " style="left:802px;top:613px;width:185px;height:24px;border:1px solid #8a8a8a;border-radius:10px;background:linear-gradient(180deg,#fafafa,#f0f0f0 40%,#e0e0e0 80%,#ececec)"></div>
<div class="a tx " style="left:802px;top:619px;width:185px;text-align:center">保存当前组设置</div>
<div class="a stripe" style="left:8px;top:770px;width:1225px;height:21px;"></div>
<div class="a " style="left:8px;top:770px;width:215px;height:1px;background:#a0a0a0"></div>
<div class="a " style="left:226px;top:770px;width:325px;height:1px;background:#a0a0a0"></div>
<div class="a " style="left:553px;top:770px;width:164px;height:1px;background:#a0a0a0"></div>
<div class="a " style="left:720px;top:770px;width:114px;height:1px;background:#a0a0a0"></div>
<div class="a " style="left:837px;top:770px;width:396px;height:1px;background:#a0a0a0"></div>
<div class="a " style="left:226px;top:770px;width:1px;height:20px;background:#a0a0a0"></div>
<div class="a " style="left:223px;top:770px;width:3px;height:21px;background:#fff"></div>
<div class="a " style="left:553px;top:770px;width:1px;height:20px;background:#a0a0a0"></div>
<div class="a " style="left:550px;top:770px;width:3px;height:21px;background:#fff"></div>
<div class="a " style="left:720px;top:770px;width:1px;height:20px;background:#a0a0a0"></div>
<div class="a " style="left:717px;top:770px;width:3px;height:21px;background:#fff"></div>
<div class="a " style="left:837px;top:770px;width:1px;height:20px;background:#a0a0a0"></div>
<div class="a " style="left:834px;top:770px;width:3px;height:21px;background:#fff"></div>
<div class="a tx " style="left:12px;top:775px;">正在被监控的客户机，共：<span class="m">0</span></div>
<div class="a tx " style="left:232px;top:775px;"><span class="m">IP:172.20.156.1,192.168.0.39,192.168.216.1,192.168.22</span></div>
<svg class="a" style="left:1224px;top:781px" width="10" height="10"><path d="M1 9L9 1M5 9L9 5" stroke="#808080" stroke-width="1.5"/></svg>
</body></html>
